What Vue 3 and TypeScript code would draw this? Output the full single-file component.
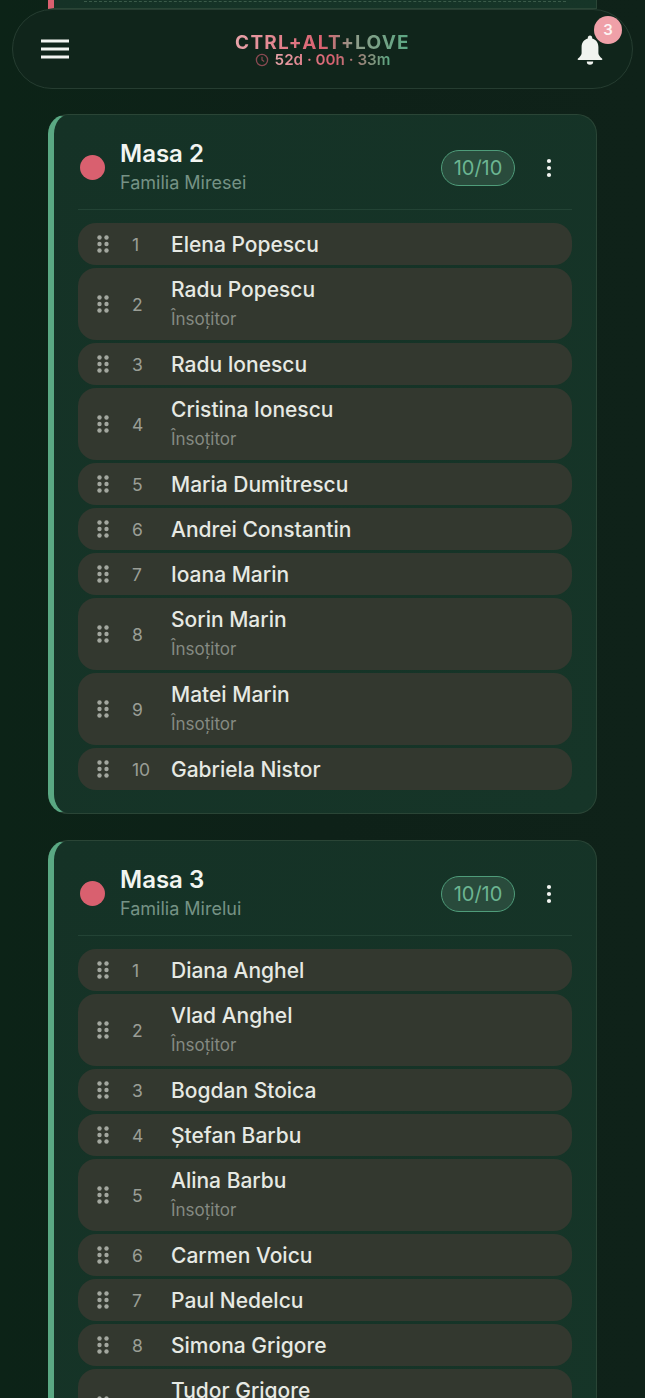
<script setup lang="ts">
interface Guest {
  name: string;
  plusOne?: boolean;
}
interface Table {
  title: string;
  side: string;
  count: string;
  guests: Guest[];
}

const tables: Table[] = [
  {
    title: "Masa 2",
    side: "Familia Miresei",
    count: "10/10",
    guests: [
      { name: "Elena Popescu" },
      { name: "Radu Popescu", plusOne: true },
      { name: "Radu Ionescu" },
      { name: "Cristina Ionescu", plusOne: true },
      { name: "Maria Dumitrescu" },
      { name: "Andrei Constantin" },
      { name: "Ioana Marin" },
      { name: "Sorin Marin", plusOne: true },
      { name: "Matei Marin", plusOne: true },
      { name: "Gabriela Nistor" },
    ],
  },
  {
    title: "Masa 3",
    side: "Familia Mirelui",
    count: "10/10",
    guests: [
      { name: "Diana Anghel" },
      { name: "Vlad Anghel", plusOne: true },
      { name: "Bogdan Stoica" },
      { name: "Ștefan Barbu" },
      { name: "Alina Barbu", plusOne: true },
      { name: "Carmen Voicu" },
      { name: "Paul Nedelcu" },
      { name: "Simona Grigore" },
      { name: "Tudor Grigore", plusOne: true },
    ],
  },
];
</script>

<template>
  <div class="page">
    <header class="topbar">
      <button class="icon-btn" aria-label="Meniu">
        <svg width="28" height="20" viewBox="0 0 28 20">
          <path d="M0 2h28M0 10h28M0 18h28" stroke="#f2f5f1" stroke-width="2.8" />
        </svg>
      </button>
      <div class="brand">
        <div class="logo">CTRL+ALT+LOVE</div>
        <div class="timer">
          <svg class="clock" width="14" height="14" viewBox="0 0 14 14" fill="none">
            <circle cx="7" cy="7" r="5.6" stroke="#8a4a52" stroke-width="1.3" />
            <path d="M7 3.8V7l2.2 1.4" stroke="#8a4a52" stroke-width="1.2" />
          </svg>
          <span class="timer-text">52d · 00h · 33m</span>
        </div>
      </div>
      <div class="bell">
        <svg width="28" height="32" viewBox="0 0 28 32">
          <path
            d="M14 1.5c-1.3 0-2.2 1-2.2 2.2v.9C7.9 5.700 5.600 9 5.600 13v6.300c0 1.800-1.500 3.400-3.600 5.200-.6.5-.5 1.500.5 1.500h23c1 0 1.100-1 .5-1.500-2.100-1.800-3.600-3.400-3.600-5.200V13c0-4-2.300-7.300-6.200-8.400v-.9c0-1.200-.9-2.200-2.200-2.200z"
            fill="#f0f3ef"
          />
          <path d="M10.800 27.500h6.400a3.200 3.200 0 0 1-6.400 0z" fill="#f0f3ef" />
        </svg>
        <span class="badge">3</span>
      </div>
    </header>

    <section class="card stub">
      <div class="stub-line"></div>
    </section>

    <section v-for="table in tables" :key="table.title" class="card">
      <div class="card-head">
        <span class="dot"></span>
        <div class="card-titles">
          <h2>{{ table.title }}</h2>
          <p>{{ table.side }}</p>
        </div>
        <span class="count">{{ table.count }}</span>
        <svg class="kebab" width="6" height="20" viewBox="0 0 6 20">
          <circle cx="3" cy="3" r="2.100" fill="#f2f5f1" />
          <circle cx="3" cy="10" r="2.100" fill="#f2f5f1" />
          <circle cx="3" cy="17" r="2.100" fill="#f2f5f1" />
        </svg>
      </div>
      <ul class="guests">
        <li
          v-for="(guest, i) in table.guests"
          :key="guest.name"
          class="guest"
          :class="{ tall: guest.plusOne }"
        >
          <svg class="grip" width="12" height="18" viewBox="0 0 12 18">
            <g fill="#a3a79f">
              <circle cx="2.500" cy="2.500" r="2.200" />
              <circle cx="9.500" cy="2.500" r="2.200" />
              <circle cx="2.500" cy="9" r="2.200" />
              <circle cx="9.500" cy="9" r="2.200" />
              <circle cx="2.500" cy="15.500" r="2.200" />
              <circle cx="9.500" cy="15.500" r="2.200" />
            </g>
          </svg>
          <span class="num">{{ i + 1 }}</span>
          <div class="who">
            <span class="name">{{ guest.name }}</span>
            <span v-if="guest.plusOne" class="role">Însoțitor</span>
          </div>
        </li>
      </ul>
    </section>
  </div>
</template>

<style>
html,
body {
  margin: 0;
  background: #0e2118;
}
</style>

<style scoped>
.page {
  position: relative;
  height: 1398px;
  overflow: hidden;
  padding: 0 48px;
  box-sizing: border-box;
  background: linear-gradient(90deg, #0c2317 0%, #0e2118 50%, #0f2219 100%);
  font-family: Inter, "Noto Sans", sans-serif;
  color: #f2f5f1;
}
.topbar {
  position: absolute;
  top: 9px;
  left: 12px;
  right: 12px;
  height: 80px;
  box-sizing: border-box;
  border: 1px solid #263d31;
  border-radius: 40px;
  background: #10251b;
  display: flex;
  align-items: center;
  justify-content: space-between;
  padding: 0 28px 0 28px;
  z-index: 5;
}
.icon-btn {
  background: none;
  border: 0;
  padding: 0;
  display: flex;
}
.brand {
  position: absolute;
  left: 0;
  right: 0;
  top: 23px;
  display: flex;
  flex-direction: column;
  align-items: center;
}
.logo {
  font-size: 19px;
  line-height: 20px;
  height: 20px;
  font-weight: 700;
  letter-spacing: 1.25px;
  background: linear-gradient(90deg, #e8a4aa 0%, #d9606f 50%, #8f9c8a 68%, #5aa883 100%);
  -webkit-background-clip: text;
  background-clip: text;
  color: transparent;
}
.timer {
  display: flex;
  align-items: center;
  justify-content: center;
  gap: 6px;
  height: 14px;
}
.timer-text {
  font-size: 15.200px;
  line-height: 14px;
  font-weight: 600;
  background: linear-gradient(90deg, #e8a4aa 0%, #d9606f 50%, #5aa883 100%);
  -webkit-background-clip: text;
  background-clip: text;
  color: transparent;
}
.bell {
  position: relative;
  display: flex;
  margin-top: 1px;
}
.badge {
  position: absolute;
  top: -18px;
  right: -18px;
  width: 28px;
  height: 28px;
  border-radius: 50%;
  background: #efa0a8;
  color: #fdf3f3;
  font-size: 15px;
  font-weight: 600;
  display: flex;
  align-items: center;
  justify-content: center;
}
.card {
  box-sizing: border-box;
  border: 1px solid #2a4536;
  border-left: 6px solid #5aa883;
  border-radius: 20px;
  background: linear-gradient(135deg, #153226 0%, #163528 100%);
  padding: 0 24px 23px 24px;
  margin-bottom: 26.400px;
}
.stub {
  height: 9px;
  margin-bottom: 105px;
  padding: 0;
  border-radius: 0;
  border-top: 0;
  border-left-color: #d9606f;
  position: relative;
  overflow: hidden;
}
.stub-line {
  margin: 1px 30px 0;
  border-top: 1px dashed #3a5a49;
}
.card-head {
  height: 95px;
  padding-top: 10px;
  display: flex;
  align-items: center;
  border-bottom: 1px solid #234335;
  box-sizing: border-box;
}
.dot {
  width: 25px;
  height: 25px;
  border-radius: 50%;
  background: #d9606f;
  margin-left: 2px;
}
.card-titles {
  margin-left: 15px;
  flex: 1;
}
.card-titles h2 {
  margin: 0;
  font-size: 24px;
  line-height: 30px;
  font-weight: 600;
  color: #f2f5f1;
}
.card-titles p {
  margin: 2px 0 0;
  font-size: 18px;
  line-height: 24px;
  color: #759285;
}
.count {
  width: 74px;
  height: 36px;
  box-sizing: border-box;
  border: 1.500px solid #4f9c7a;
  border-radius: 18px;
  background: #294b3c;
  color: #6cb592;
  font-size: 20px;
  display: flex;
  align-items: center;
  justify-content: center;
  margin-right: 31px;
  margin-top: 2px;
}
.kebab {
  margin-right: 20px;
  margin-top: 2px;
}
.guests {
  list-style: none;
  margin: 13px 0 0;
  padding: 0;
  display: flex;
  flex-direction: column;
  gap: 3px;
}
.guest {
  height: 42px;
  box-sizing: border-box;
  border-radius: 18px;
  background: #33382f;
  display: flex;
  align-items: center;
  padding-left: 19px;
}
.guest.tall {
  height: 72px;
}
.grip {
  flex: none;
}
.num {
  width: 35px;
  margin-left: 23px;
  margin-right: 4px;
  color: #9a9e96;
  font-size: 17.500px;
  flex: none;
}
.who {
  display: flex;
  flex-direction: column;
}
.guest:not(.tall) .who {
  padding-top: 1px;
}
.name {
  font-size: 21px;
  line-height: 26px;
  font-weight: 500;
  color: #e6e9e3;
}
.role {
  font-size: 17px;
  line-height: 24px;
  margin-top: 4px;
  color: #858a82;
}
</style>
